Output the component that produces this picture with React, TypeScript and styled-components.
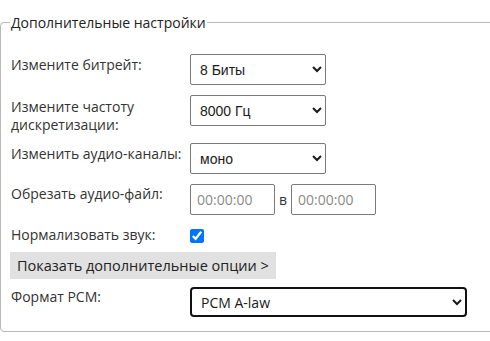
import styled, { createGlobalStyle } from "styled-components";

const GlobalStyle = createGlobalStyle`
    html, body {
        margin: 0;
        padding: 0;
        background: #ffffff;
        overflow: hidden;
    }
    body {
        font-family: "Open Sans", "Liberation Sans", sans-serif;
        font-size: 14px;
        color: #333333;
    }
`;

const Fieldset = styled.fieldset`
    width: 520px;
    margin: 13px 0 0 0;
    padding: 0 9px 14px 9px;
    border: 1px solid #b9b9b9;
    border-radius: 4px;
    box-sizing: border-box;
`;

const Legend = styled.legend`
    padding: 0 1px;
    font-size: 14px;
    line-height: 19px;
    color: #222222;
`;

interface I_Row {
    gap: number;
}

const Row = styled.div<I_Row>`
    display: grid;
    grid-template-columns: 180px auto;
    align-items: start;
    margin-top: ${(props) => props.gap}px;
`;

interface I_Label {
    offset?: number;
}

const Label = styled.div<I_Label>`
    padding-top: ${(props) => props.offset ?? 0}px;
    padding-left: 1px;
    line-height: 18px;
    color: #333333;
`;

interface I_Select {
    wide?: boolean;
}

const Select = styled.select<I_Select>`
    width: ${(props) => (props.wide ? 277 : 136)}px;
    height: ${(props) => (props.wide ? 30 : 31)}px;
    padding: 0 ${(props) => (props.wide ? 5 : 5)}px;
    box-sizing: border-box;
    border: ${(props) => (props.wide ? "2px solid #111111" : "1px solid #7a7a7a")};
    border-radius: ${(props) => (props.wide ? 4 : 2)}px;
    background: #ffffff;
    color: #1a1a1a;
    font-family: ${(props) => (props.wide ? `"Open Sans", sans-serif` : `"Liberation Sans", Arial, sans-serif`)};
    font-size: 14px;
    outline: none;
`;

const TimeGroup = styled.div`
    display: flex;
    align-items: center;
    gap: 4px;
`;

const TimeInput = styled.input`
    width: 85px;
    height: 31px;
    padding: 0 6px;
    box-sizing: border-box;
    border: 1px solid #7a7a7a;
    border-radius: 2px;
    font-family: "Open Sans", sans-serif;
    font-size: 14px;
    color: #333333;
    &::placeholder {
        color: #8a8a8a;
    }
`;

const Sep = styled.span`
    color: #333333;
    line-height: 18px;
`;

const Check = styled.input`
    width: 14px;
    height: 14px;
    margin: 3px 0 0 0;
    accent-color: #0075ff;
`;

const ToggleButton = styled.button`
    display: block;
    margin-top: 8px;
    height: 27px;
    padding: 0 7px;
    border: none;
    border-radius: 0;
    background: #e1e1e1;
    font-family: "Open Sans", sans-serif;
    font-size: 14.5px;
    color: #222222;
    cursor: pointer;
`;

function App() {
    return (
        <>
            <GlobalStyle />
            <Fieldset>
                <Legend>Дополнительные настройки</Legend>
                <Row gap={22}>
                    <Label offset={2}>Измените битрейт:</Label>
                    <Select defaultValue="8">
                        <option value="8">8 Биты</option>
                        <option value="16">16 Биты</option>
                    </Select>
                </Row>
                <Row gap={10}>
                    <Label offset={3}>Измените частоту<br />дискретизации:</Label>
                    <Select defaultValue="8000">
                        <option value="8000">8000 Гц</option>
                        <option value="44100">44100 Гц</option>
                    </Select>
                </Row>
                <Row gap={9}>
                    <Label offset={2}>Изменить аудио-каналы:</Label>
                    <Select defaultValue="mono">
                        <option value="mono">моно</option>
                        <option value="stereo">стерео</option>
                    </Select>
                </Row>
                <Row gap={10}>
                    <Label offset={1}>Обрезать аудио-файл:</Label>
                    <TimeGroup>
                        <TimeInput placeholder="00:00:00" />
                        <Sep>в</Sep>
                        <TimeInput placeholder="00:00:00" />
                    </TimeGroup>
                </Row>
                <Row gap={11}>
                    <Label>Нормализовать звук:</Label>
                    <Check type="checkbox" defaultChecked />
                </Row>
                <ToggleButton>Показать дополнительные опции &gt;</ToggleButton>
                <Row gap={8}>
                    <Label offset={1}>Формат PCM:</Label>
                    <Select wide defaultValue="alaw">
                        <option value="alaw">PCM A-law</option>
                        <option value="ulaw">PCM µ-law</option>
                    </Select>
                </Row>
            </Fieldset>
        </>
    );
}

export default App;
